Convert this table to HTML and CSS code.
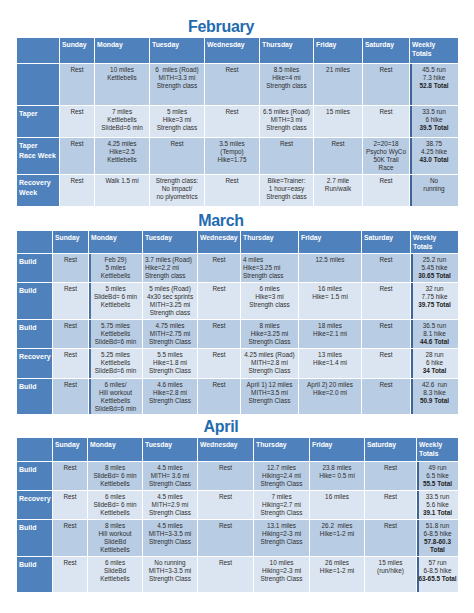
FILE: index.html
```html
<!DOCTYPE html>
<html>
<head>
<meta charset="utf-8">
<link rel="stylesheet" href="styles.css">
</head>
<body>
<div class="page">
  <section class="month feb">
    <h2 class="title">February</h2>
    <table class="sched">
      <colgroup><col><col><col><col><col><col><col><col><col></colgroup>
      <thead>
        <tr class="h"><th></th><th>Sunday</th><th>Monday</th><th>Tuesday</th><th>Wednesday</th><th>Thursday</th><th>Friday</th><th>Saturday</th><th>Weekly<br>Totals</th></tr>
      </thead>
      <tbody>
        <tr class="d r1"><th class="lab"></th><td>Rest</td><td>10 miles<br>Kettlebells</td><td>6&nbsp; miles (Road)<br>MITH=3.3 mi<br>Strength class</td><td>Rest</td><td>8.5 miles<br>Hike=4 mi<br>Strength class</td><td>21 miles</td><td>Rest</td><td class="tot">45.5 run<br>7.3 hike<br><b>52.8 Total</b></td></tr>
        <tr class="l r2"><th class="lab">Taper</th><td>Rest</td><td>7 miles<br>Kettlebells<br>SlideBd=6 min</td><td>5 miles<br>Hike=3 mi<br>Strength class</td><td>Rest</td><td>6.5 miles (Road)<br>MITH=3 mi<br>Strength class</td><td>15 miles</td><td>Rest</td><td class="tot">33.5 run<br>6 hike<br><b>39.5 Total</b></td></tr>
        <tr class="d r3"><th class="lab">Taper<br>Race Week</th><td>Rest</td><td>4.25 miles<br>Hike=2.5<br>Kettlebells</td><td>Rest</td><td>3.5 miles<br>(Tempo)<br>Hike=1.75</td><td>Rest</td><td>Rest</td><td>2=20=18<br>Psycho WyCo<br>50K Trail<br>Race</td><td class="tot">38.75<br>4.25 hike<br><b>43.0 Total</b></td></tr>
        <tr class="l r4"><th class="lab">Recovery<br>Week</th><td>Rest</td><td>Walk 1.5 mi</td><td>Strength class:<br>No impact/<br>no plyometrics</td><td>Rest</td><td>Bike=Trainer:<br>1 hour=easy<br>Strength class</td><td>2.7 mile<br>Run/walk</td><td>Rest</td><td class="tot">No<br>running</td></tr>
      </tbody>
    </table>
  </section>

  <section class="month mar">
    <h2 class="title">March</h2>
    <table class="sched">
      <colgroup><col><col><col><col><col><col><col><col><col></colgroup>
      <thead>
        <tr class="h"><th></th><th>Sunday</th><th>Monday</th><th>Tuesday</th><th>Wednesday</th><th>Thursday</th><th>Friday</th><th>Saturday</th><th>Weekly<br>Totals</th></tr>
      </thead>
      <tbody>
        <tr class="d r1"><th class="lab">Build</th><td>Rest</td><td class="mon">Feb 29)<br>5 miles<br>Kettlebells</td><td class="lft">3.7 miles (Road)<br>Hike=2.2 mi<br>Strength class</td><td>Rest</td><td class="lft">4 miles<br>Hike=3.25 mi<br>Strength class</td><td>12.5 miles</td><td>Rest</td><td class="tot">25.2 run<br>5.45 hike<br><b>30.65 Total</b></td></tr>
        <tr class="l r2"><th class="lab">Build</th><td>Rest</td><td class="mon">5 miles<br>SlideBd= 6 min<br>Kettlebells</td><td>5 miles (Road)<br>4x30 sec sprints<br>MITH=3.25 mi<br>Strength class</td><td>Rest</td><td>6 miles<br>Hike=3 mi<br>Strength class</td><td>16 miles<br>Hike= 1.5 mi</td><td>Rest</td><td class="tot">32 run<br>7.75 hike<br><b>39.75 Total</b></td></tr>
        <tr class="d r3"><th class="lab">Build</th><td>Rest</td><td class="mon">5.75 miles<br>Kettlebells<br>SlideBd=6 min</td><td>4.75 miles<br>MITH=2.75 mi<br>Strength Class</td><td>Rest</td><td>8 miles<br>Hike=3.25 mi<br>Strength Class</td><td>18 miles<br>Hike=2.1 mi</td><td>Rest</td><td class="tot">36.5 run<br>8.1 hike<br><b>44.6 Total</b></td></tr>
        <tr class="l r4"><th class="lab">Recovery</th><td>Rest</td><td class="mon">5.25 miles<br>Kettlebells<br>SlideBd=6 min</td><td>5.5 miles<br>Hike=1.8 mi<br>Strength Class</td><td>Rest</td><td>4.25 miles (Road)<br>MITH=2.8 mi<br>Strength Class</td><td>13 miles<br>Hike=1.4 mi</td><td>Rest</td><td class="tot">28 run<br>6 hike<br><b>34 Total</b></td></tr>
        <tr class="d r5"><th class="lab">Build</th><td>Rest</td><td class="mon">6 miles/<br>Hill workout<br>Kettlebells<br>SlideBd=6 min</td><td>4.6 miles<br>Hike=2.8 mi<br>Strength Class</td><td>Rest</td><td>April 1) 12 miles<br>MITH=3.5 mi<br>Strength Class</td><td>April 2) 20 miles<br>Hike=2.0 mi</td><td>Rest</td><td class="tot">42.6&nbsp; run<br>8.3 hike<br><b>50.9 Total</b></td></tr>
      </tbody>
    </table>
  </section>

  <section class="month apr">
    <h2 class="title">April</h2>
    <table class="sched">
      <colgroup><col><col><col><col><col><col><col><col><col></colgroup>
      <thead>
        <tr class="h"><th></th><th>Sunday</th><th>Monday</th><th>Tuesday</th><th>Wednesday</th><th>Thursday</th><th>Friday</th><th>Saturday</th><th>Weekly<br>Totals</th></tr>
      </thead>
      <tbody>
        <tr class="d r1"><th class="lab">Build</th><td>Rest</td><td>8 miles<br>SlideBd= 6 min<br>Kettlebells</td><td>4.5 miles<br>MITH= 3.6 mi<br>Strength Class</td><td>Rest</td><td>12.7 miles<br>Hiking=2.4 mi<br>Strength Class</td><td>23.8 miles<br>Hike= 0.5 mi</td><td>Rest</td><td class="tot">49 run<br>6.5 hike<br><b>55.5 Total</b></td></tr>
        <tr class="l r2"><th class="lab">Recovery</th><td>Rest</td><td>6 miles<br>SlideBd= 6 min<br>Kettlebells</td><td>4.5 miles<br>MITH=2.9 mi<br>Strength Class</td><td>Rest</td><td>7 miles<br>Hiking=2.7 mi<br>Strength Class</td><td>16 miles</td><td>Rest</td><td class="tot">33.5 run<br>5.6 hike<br><b>39.1 Total</b></td></tr>
        <tr class="d r3"><th class="lab">Build</th><td>Rest</td><td>8 miles<br>Hill workout<br>SlideBd<br>Kettlebells</td><td>4.5 miles<br>MITH=3-3.5 mi<br>Strength Class</td><td>Rest</td><td>13.1 miles<br>Hiking=2-3 mi<br>Strength Class</td><td>26.2&nbsp; miles<br>Hike=1-2 mi</td><td>Rest</td><td class="tot">51.8 run<br>6-8.5 hike<br><b>57.8-60.3<br>Total</b></td></tr>
        <tr class="l r4"><th class="lab">Build</th><td>Rest</td><td>6 miles<br>SlideBd<br>Kettlebells</td><td>No running<br>MITH=3-3.5 mi<br>Strength Class</td><td>Rest</td><td>10 miles<br>Hiking=2-3 mi<br>Strength Class</td><td>26 miles<br>Hike=1-2 mi</td><td>15 miles<br>(run/hike)</td><td class="tot">57 run<br>6-8.5 hike<br><b>63-65.5 Total</b></td></tr>
      </tbody>
    </table>
  </section>
</div>
</body>
</html>
```
FILE: styles.css
```css
* { box-sizing: border-box; }
html, body { margin: 0; padding: 0; background: #fff; }
body { font-family: "Liberation Sans", Arial, sans-serif; }

.page { width: 474px; padding: 17px 0 0 17px; }

.month { width: 442px; }
.mar { margin-top: 4px; }
.apr { margin-top: 2px; }

.title {
  margin: 0;
  height: 20px;
  line-height: 20px;
  font-size: 16px;
  font-weight: bold;
  color: #1f6cb0;
  text-align: center;
  padding-right: 34px;
  letter-spacing: -0.3px;
}
.feb .title, .apr .title { margin-bottom: 1px; }

.sched {
  width: 442px;
  border-collapse: separate;
  border-spacing: 0;
  table-layout: fixed;
}
.sched th, .sched td {
  border-right: 1px solid #fff;
  border-bottom: 1px solid #fff;
  vertical-align: top;
  overflow: hidden;
}
.sched thead th {
  background: #4f81bd;
  color: #fff;
  font-size: 6.8px;
  line-height: 9px;
  font-weight: bold;
  text-align: left;
  padding: 2px 1px 0 2px;
}
.sched .lab {
  background: #4f81bd;
  color: #fff;
  font-size: 7px;
  line-height: 10px;
  font-weight: bold;
  text-align: left;
  padding: 3px 1px 0 2px;
}
.sched td {
  font-size: 6.4px;
  line-height: 8px;
  text-align: center;
  color: #2e2e2e;
  padding: 2px 1px 0;
  white-space: nowrap;
}
.sched td b { color: #1e1e1e; }
.sched tr.d td { background: #b8cce4; }
.sched tr.l td { background: #dbe5f1; }
.sched td.tot { box-shadow: inset 2px 0 0 #3e6498; }
.sched td.mon { box-shadow: inset 2px 0 0 #4a72a6; }
.sched td.lft { text-align: left; padding-left: 2px; }

/* February */
.feb col:nth-child(1) { width: 43px; }
.feb col:nth-child(2) { width: 35px; }
.feb col:nth-child(3) { width: 55px; }
.feb col:nth-child(4) { width: 55px; }
.feb col:nth-child(5) { width: 55px; }
.feb col:nth-child(6) { width: 54px; }
.feb col:nth-child(7) { width: 49px; }
.feb col:nth-child(8) { width: 47px; }
.feb col:nth-child(9) { width: 49px; }
.feb tr.h { height: 26px; }
.feb tr.r1 { height: 42px; }
.feb tr.r2 { height: 32px; }
.feb tr.r3 { height: 37px; }
.feb tr.r4 { height: 32px; }
.feb tr.l td.tot { background: #b8cce4; }

/* March */
.mar col:nth-child(1) { width: 36px; }
.mar col:nth-child(2) { width: 36px; }
.mar col:nth-child(3) { width: 54px; }
.mar col:nth-child(4) { width: 55px; }
.mar col:nth-child(5) { width: 43px; }
.mar col:nth-child(6) { width: 58px; }
.mar col:nth-child(7) { width: 63px; }
.mar col:nth-child(8) { width: 49px; }
.mar col:nth-child(9) { width: 48px; }
.mar tr.h { height: 23px; }
.mar tr.r1 { height: 29px; }
.mar tr.r2 { height: 37px; }
.mar tr.r3 { height: 29px; }
.mar tr.r4 { height: 30px; }
.mar tr.r5 { height: 36px; }

/* April */
.apr col:nth-child(1) { width: 36px; }
.apr col:nth-child(2) { width: 35px; }
.apr col:nth-child(3) { width: 55px; }
.apr col:nth-child(4) { width: 55px; }
.apr col:nth-child(5) { width: 56px; }
.apr col:nth-child(6) { width: 56px; }
.apr col:nth-child(7) { width: 55px; }
.apr col:nth-child(8) { width: 52px; }
.apr col:nth-child(9) { width: 42px; }
.apr tr.h { height: 24px; }
.apr tr.r1 { height: 29px; }
.apr tr.r2 { height: 29px; }
.apr tr.r3 { height: 37px; }
.apr tr.r4 { height: 36px; }
```
